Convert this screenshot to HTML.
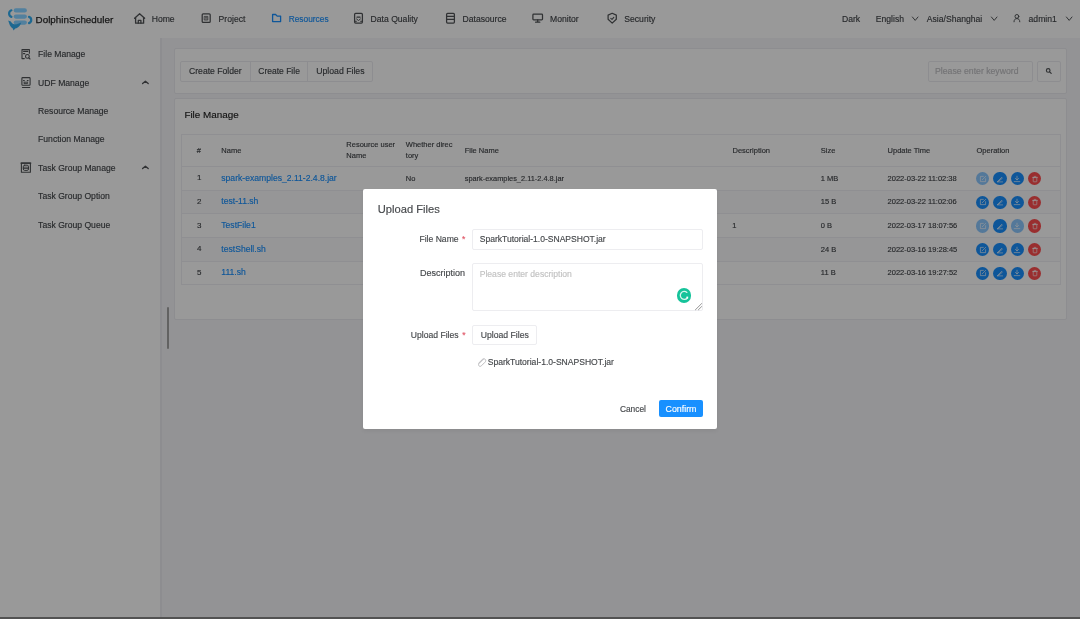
<!DOCTYPE html>
<html><head><meta charset="utf-8"><title>DolphinScheduler</title>
<style>
html,body{margin:0;padding:0;width:1080px;height:619px;overflow:hidden;background:#fff;font-family:"Liberation Sans",sans-serif}
.r{position:absolute;display:block}
.t{position:absolute;white-space:nowrap;line-height:1;-webkit-text-stroke:0.15px currentColor}
.wrap{position:absolute;left:0;top:0;width:1080px;height:619px;filter:blur(0.35px)}
</style></head><body><div class="wrap">
<div class="r" style="left:-4px;top:-4px;width:1088.00px;height:42.00px;background:#fff"></div>
<div class="t" style="left:35.60px;top:14.67px;font-size:9.84px;color:#2a2a2a;-webkit-text-stroke:0.25px #2a2a2a">DolphinScheduler</div>
<svg class="r" style="left:132px;top:11px" width="16" height="15" viewBox="132 11 16 15" fill="none" stroke="#505356" stroke-width="1.3" stroke-linecap="round" stroke-linejoin="round"><path d="M134.6 18.3 L139.6 13.8 L144.6 18.3"/><path d="M135.6 17.6 V23.2 H143.6 V17.6"/><path d="M138.3 23.2 V20.3 H140.9 V23.2"/></svg>
<div class="t" style="left:151.70px;top:14.62px;font-size:8.6px;color:#43464a;">Home</div>
<svg class="r" style="left:200px;top:12px" width="13" height="13" viewBox="200 12 13 13" fill="none" stroke="#505356" stroke-width="1.25" stroke-linecap="round" stroke-linejoin="round"><rect x="202.2" y="13.8" width="8" height="8.6" rx="1"/><rect x="204.6" y="16.4" width="3.2" height="3.6" stroke-width="0.8"/><path d="M205.4 17.6h1.6M205.4 18.9h1.6" stroke-width="0.7"/></svg>
<div class="t" style="left:218.60px;top:14.62px;font-size:8.6px;color:#43464a;">Project</div>
<svg class="r" style="left:270px;top:12px" width="14" height="12" viewBox="270 12 14 12" fill="none" stroke="#1890ff" stroke-width="1.3" stroke-linecap="round" stroke-linejoin="round"><path d="M272.6 14.5 H275.6 L277.2 16.1 H280.6 V21.6 H272.6 Z"/></svg>
<div class="t" style="left:288.70px;top:14.83px;font-size:8.35px;color:#1890ff;">Resources</div>
<svg class="r" style="left:352px;top:11px" width="13" height="14" viewBox="352 11 13 14" fill="none" stroke="#505356" stroke-width="1.25" stroke-linecap="round" stroke-linejoin="round"><rect x="354.6" y="13.4" width="7.8" height="9.6" rx="1"/><path d="M357 17.2h3"/><path d="M356.6 19 l1.9 1.5 l1.9 -1.5" stroke-width="1"/><path d="M354.8 21.3h1.6M360.6 21.3h1.6" stroke-width="1"/></svg>
<div class="t" style="left:370.60px;top:14.62px;font-size:8.6px;color:#43464a;">Data Quality</div>
<svg class="r" style="left:444px;top:11px" width="13" height="14" viewBox="444 11 13 14" fill="none" stroke="#505356" stroke-width="1.25" stroke-linecap="round" stroke-linejoin="round"><rect x="446.6" y="13.4" width="7.8" height="9.6" rx="1"/><path d="M446.6 16.3h7.8M446.6 19.4h7.8"/></svg>
<div class="t" style="left:462.60px;top:14.62px;font-size:8.6px;color:#43464a;">Datasource</div>
<svg class="r" style="left:530px;top:11px" width="15" height="14" viewBox="530 11 15 14" fill="none" stroke="#505356" stroke-width="1.25" stroke-linecap="round" stroke-linejoin="round"><rect x="532.9" y="14.2" width="9.6" height="5.6" rx="0.8"/><path d="M537.7 19.8v2.2M535.6 22.2h4.2"/></svg>
<div class="t" style="left:550.00px;top:14.62px;font-size:8.6px;color:#43464a;">Monitor</div>
<svg class="r" style="left:606px;top:11px" width="13" height="14" viewBox="606 11 13 14" fill="none" stroke="#505356" stroke-width="1.25" stroke-linecap="round" stroke-linejoin="round"><path d="M612.2 13.3 L616.3 15.1 V19.3 L612.2 23.1 L608.1 19.3 V15.1 Z"/><path d="M610.8 18.3 l1.2 1 l1.8 -1.9" stroke-width="1.1"/></svg>
<div class="t" style="left:624.30px;top:14.62px;font-size:8.6px;color:#43464a;">Security</div>
<div class="t" style="left:842.00px;top:14.62px;font-size:8.6px;color:#43464a;">Dark</div>
<div class="t" style="left:875.80px;top:14.62px;font-size:8.6px;color:#43464a;">English</div>
<svg class="r" style="left:911.0px;top:15.5px" width="9.0" height="7.0" viewBox="911.0 15.5 9.0 7.0" fill="none" stroke="#55585b" stroke-width="1.0" stroke-linecap="round" stroke-linejoin="round"><path d="M912.4 16.5 L915.2 19.9 L918.0 16.5"/></svg>
<div class="t" style="left:926.80px;top:14.62px;font-size:8.6px;color:#43464a;">Asia/Shanghai</div>
<svg class="r" style="left:990.2px;top:15.5px" width="9.0" height="7.0" viewBox="990.2 15.5 9.0 7.0" fill="none" stroke="#55585b" stroke-width="1.0" stroke-linecap="round" stroke-linejoin="round"><path d="M991.6 16.5 L994.4000000000001 19.9 L997.2 16.5"/></svg>
<svg class="r" style="left:1012px;top:13px" width="10" height="11" viewBox="1012 13 10 11" fill="none" stroke="#505356" stroke-width="1.0" stroke-linecap="round" stroke-linejoin="round"><circle cx="1016.9" cy="16.4" r="1.9"/><path d="M1014 21.8 C1014 19.6 1015.2 18.6 1016.9 18.6 C1018.6 18.6 1019.8 19.6 1019.8 21.8"/></svg>
<div class="t" style="left:1028.60px;top:14.62px;font-size:8.6px;color:#43464a;">admin1</div>
<svg class="r" style="left:1064.6px;top:15.5px" width="9.0" height="7.0" viewBox="1064.6 15.5 9.0 7.0" fill="none" stroke="#55585b" stroke-width="1.0" stroke-linecap="round" stroke-linejoin="round"><path d="M1066.0 16.5 L1068.8 19.9 L1071.6 16.5"/></svg>
<div class="r" style="left:-4px;top:38px;width:164.00px;height:585.00px;background:#fff"></div>
<div class="r" style="left:160px;top:38px;width:1.80px;height:585.00px;background:#ebebf0"></div>
<div class="t" style="left:38.10px;top:50.22px;font-size:8.6px;color:#43464a;">File Manage</div>
<div class="t" style="left:38.10px;top:78.62px;font-size:8.6px;color:#43464a;">UDF Manage</div>
<div class="t" style="left:38.10px;top:107.02px;font-size:8.6px;color:#43464a;">Resource Manage</div>
<div class="t" style="left:38.10px;top:135.32px;font-size:8.6px;color:#43464a;">Function Manage</div>
<div class="t" style="left:38.10px;top:163.72px;font-size:8.6px;color:#43464a;">Task Group Manage</div>
<div class="t" style="left:38.10px;top:192.12px;font-size:8.6px;color:#43464a;">Task Group Option</div>
<div class="t" style="left:38.10px;top:220.52px;font-size:8.6px;color:#43464a;">Task Group Queue</div>
<svg class="r" style="left:20px;top:47px" width="12" height="14" viewBox="20 47 12 14" fill="none" stroke="#505356" stroke-width="1.1" stroke-linecap="round" stroke-linejoin="round"><path d="M24.3 58.6 H22 V49.6 H29.4 V53.2"/><path d="M23.6 51.4h4.2"/><path d="M23.4 53.6h1.4"/><circle cx="27.4" cy="56.4" r="1.9"/><path d="M28.8 57.8 L30 59"/></svg>
<svg class="r" style="left:20px;top:76px" width="12" height="13" viewBox="20 76 12 13" fill="none" stroke="#505356" stroke-width="1.1" stroke-linecap="round" stroke-linejoin="round"><rect x="21.9" y="77.6" width="8.2" height="7.6" rx="0.8"/><path d="M23.5 80.6h0.8M27.3 80.6h0.8" stroke-width="1.1"/><rect x="24.4" y="82.2" width="3.2" height="1.4" stroke-width="0.9"/><path d="M22.4 87.5h7.4" stroke-width="1.1"/></svg>
<svg class="r" style="left:19px;top:161px" width="14" height="14" viewBox="19 161 14 14" fill="none" stroke="#505356" stroke-width="1.1" stroke-linecap="round" stroke-linejoin="round"><rect x="21.4" y="163.1" width="9" height="9.2"/><rect x="23.3" y="165.2" width="5.2" height="5.2" rx="1.4" stroke-width="1"/><path d="M23.3 167.2h5.2M23.3 168.5h5.2" stroke-width="0.8"/><path d="M21 163.1h9.8" stroke-width="1.3"/></svg>
<svg class="r" style="left:141.0px;top:80.0px" width="9.0" height="6.0" viewBox="141.0 80.0 9.0 6.0" fill="none" stroke="#505356" stroke-width="1.35" stroke-linecap="round" stroke-linejoin="round"><path d="M142.6 83.6 L145.4 81.3 L148.2 83.6"/></svg>
<svg class="r" style="left:141.0px;top:165.2px" width="9.0" height="6.0" viewBox="141.0 165.2 9.0 6.0" fill="none" stroke="#505356" stroke-width="1.35" stroke-linecap="round" stroke-linejoin="round"><path d="M142.6 168.79999999999998 L145.4 166.5 L148.2 168.79999999999998"/></svg>
<div class="r" style="left:161.8px;top:38px;width:922.20px;height:585.00px;background:#f6f6f9"></div>
<div class="r" style="left:173.6px;top:47.6px;width:893.90px;height:46.40px;background:#fff;border:1px solid #ebebf0;box-sizing:border-box;border-radius:2px"></div>
<div class="r" style="left:180.2px;top:61px;width:192.60px;height:20.70px;background:#fff;border:1px solid #ececf0;border-radius:2px;box-sizing:border-box"></div>
<div class="r" style="left:249.8px;top:61px;width:1.00px;height:20.70px;background:#ececf0"></div>
<div class="r" style="left:307.3px;top:61px;width:1.00px;height:20.70px;background:#ececf0"></div>
<div class="t" style="left:189.00px;top:66.89px;font-size:8.64px;color:#43464a;">Create Folder</div>
<div class="t" style="left:258.30px;top:67.00px;font-size:8.51px;color:#43464a;">Create File</div>
<div class="t" style="left:316.20px;top:66.83px;font-size:8.71px;color:#43464a;">Upload Files</div>
<div class="r" style="left:928.3px;top:61.4px;width:105.00px;height:20.20px;background:#fff;border:1px solid #ececf0;border-radius:2px;box-sizing:border-box"></div>
<div class="t" style="left:935.00px;top:66.94px;font-size:8.7px;color:#c0c0c4;">Please enter keyword</div>
<div class="r" style="left:1036.7px;top:61.4px;width:24.20px;height:20.20px;background:#fff;border:1px solid #ececf0;border-radius:2px;box-sizing:border-box"></div>
<svg class="r" style="left:1044px;top:66px" width="11" height="11" viewBox="1044 66 11 11" fill="none" stroke="#505356" stroke-width="1.15" stroke-linecap="round" stroke-linejoin="round"><circle cx="1048.2" cy="70.4" r="1.8"/><path d="M1049.6 71.8 L1051.2 73.4"/></svg>
<div class="r" style="left:173.6px;top:98.2px;width:893.90px;height:221.50px;background:#fff;border:1px solid #ebebf0;box-sizing:border-box;border-radius:2px"></div>
<div class="t" style="left:184.40px;top:109.65px;font-size:9.87px;color:#222;">File Manage</div>
<div class="r" style="left:180.8px;top:134.3px;width:880.20px;height:150.90px;background:#fff;border:1px solid #efeff3;box-sizing:border-box"></div>
<div class="r" style="left:181.8px;top:166px;width:878.20px;height:1.00px;background:#efeff3"></div>
<div class="r" style="left:181.8px;top:189.6px;width:878.20px;height:1.00px;background:#efeff3"></div>
<div class="r" style="left:181.8px;top:190.6px;width:878.20px;height:22.40px;background:#fafafc"></div>
<div class="r" style="left:181.8px;top:213.0px;width:878.20px;height:1.00px;background:#efeff3"></div>
<div class="r" style="left:181.8px;top:236.9px;width:878.20px;height:1.00px;background:#efeff3"></div>
<div class="r" style="left:181.8px;top:237.9px;width:878.20px;height:22.70px;background:#fafafc"></div>
<div class="r" style="left:181.8px;top:260.6px;width:878.20px;height:1.00px;background:#efeff3"></div>
<div class="t" style="left:196.70px;top:146.75px;font-size:7.5px;color:#43464a;">#</div>
<div class="t" style="left:221.30px;top:146.75px;font-size:7.5px;color:#43464a;">Name</div>
<div class="t" style="left:346.30px;top:141.15px;font-size:7.5px;color:#43464a;">Resource user</div>
<div class="t" style="left:346.30px;top:152.45px;font-size:7.5px;color:#43464a;">Name</div>
<div class="t" style="left:405.80px;top:141.15px;font-size:7.5px;color:#43464a;">Whether direc</div>
<div class="t" style="left:405.80px;top:152.45px;font-size:7.5px;color:#43464a;">tory</div>
<div class="t" style="left:464.70px;top:146.75px;font-size:7.5px;color:#43464a;">File Name</div>
<div class="t" style="left:732.50px;top:146.75px;font-size:7.5px;color:#43464a;">Description</div>
<div class="t" style="left:820.80px;top:146.75px;font-size:7.5px;color:#43464a;">Size</div>
<div class="t" style="left:887.60px;top:146.75px;font-size:7.5px;color:#43464a;">Update Time</div>
<div class="t" style="left:976.50px;top:146.75px;font-size:7.5px;color:#43464a;">Operation</div>
<div class="t" style="left:196.90px;top:174.23px;font-size:8.0px;color:#43464a;">1</div>
<div class="t" style="left:221.30px;top:173.72px;font-size:8.6px;color:#1890ff;">spark-examples_2.11-2.4.8.jar</div>
<div class="t" style="left:405.80px;top:174.65px;font-size:7.5px;color:#43464a;">No</div>
<div class="t" style="left:464.70px;top:174.74px;font-size:7.4px;color:#43464a;">spark-examples_2.11-2.4.8.jar</div>
<div class="t" style="left:820.80px;top:174.65px;font-size:7.5px;color:#43464a;">1 MB</div>
<div class="t" style="left:887.60px;top:174.65px;font-size:7.5px;color:#43464a;">2022-03-22 11:02:38</div>
<div class="r" style="left:976.10px;top:171.90px;width:13.4px;height:13.4px;border-radius:50%;background:#8cc8ff"></div>
<svg class="r" style="left:978.8px;top:174.6px" width="8.0" height="8.0" viewBox="978.8 174.6 8.0 8.0" fill="none" stroke="rgba(255,255,255,.85)" stroke-width="0.75" stroke-linecap="round" stroke-linejoin="round"><path d="M983.0999999999999 176.0 H980.1999999999999 V181.2 H985.4 V178.29999999999998"/><path d="M982.0 179.4 L985.4 176.0"/></svg>
<div class="r" style="left:993.35px;top:171.90px;width:13.4px;height:13.4px;border-radius:50%;background:#1890ff"></div>
<svg class="r" style="left:996.05px;top:174.6px" width="8.0" height="8.0" viewBox="996.05 174.6 8.0 8.0" fill="none" stroke="rgba(255,255,255,.85)" stroke-width="0.75" stroke-linecap="round" stroke-linejoin="round"><path d="M997.65 181.0 L1001.65 177.0 L1002.4499999999999 177.79999999999998 L998.4499999999999 181.0 Z"/><path d="M997.4499999999999 181.5 H1002.65" stroke-width="0.7"/></svg>
<div class="r" style="left:1010.60px;top:171.90px;width:13.4px;height:13.4px;border-radius:50%;background:#1890ff"></div>
<svg class="r" style="left:1013.3px;top:174.6px" width="8.0" height="8.0" viewBox="1013.3 174.6 8.0 8.0" fill="none" stroke="rgba(255,255,255,.85)" stroke-width="0.75" stroke-linecap="round" stroke-linejoin="round"><path d="M1017.3 175.79999999999998 V179.4 M1015.6999999999999 178.0 L1017.3 179.6 L1018.9 178.0 M1014.5 181.2 H1020.0999999999999"/></svg>
<div class="r" style="left:1027.85px;top:171.90px;width:13.4px;height:13.4px;border-radius:50%;background:#ff4d4f"></div>
<svg class="r" style="left:1030.55px;top:174.6px" width="8.0" height="8.0" viewBox="1030.55 174.6 8.0 8.0" fill="none" stroke="rgba(255,255,255,.85)" stroke-width="0.75" stroke-linecap="round" stroke-linejoin="round"><rect x="1032.75" y="177.2" width="3.6" height="4.2" rx="0.5"/><path d="M1031.95 177.0h5.2M1033.6499999999999 176.0h1.8"/></svg>
<div class="t" style="left:196.90px;top:197.93px;font-size:8.0px;color:#43464a;">2</div>
<div class="t" style="left:221.30px;top:197.42px;font-size:8.6px;color:#1890ff;">test-11.sh</div>
<div class="t" style="left:405.80px;top:198.35px;font-size:7.5px;color:#43464a;">No</div>
<div class="t" style="left:464.70px;top:198.44px;font-size:7.4px;color:#43464a;">test-11.sh</div>
<div class="t" style="left:820.80px;top:198.35px;font-size:7.5px;color:#43464a;">15 B</div>
<div class="t" style="left:887.60px;top:198.35px;font-size:7.5px;color:#43464a;">2022-03-22 11:02:06</div>
<div class="r" style="left:976.10px;top:195.60px;width:13.4px;height:13.4px;border-radius:50%;background:#1890ff"></div>
<svg class="r" style="left:978.8px;top:198.3px" width="8.0" height="8.0" viewBox="978.8 198.3 8.0 8.0" fill="none" stroke="rgba(255,255,255,.85)" stroke-width="0.75" stroke-linecap="round" stroke-linejoin="round"><path d="M983.0999999999999 199.7 H980.1999999999999 V204.89999999999998 H985.4 V201.99999999999997"/><path d="M982.0 203.1 L985.4 199.7"/></svg>
<div class="r" style="left:993.35px;top:195.60px;width:13.4px;height:13.4px;border-radius:50%;background:#1890ff"></div>
<svg class="r" style="left:996.05px;top:198.3px" width="8.0" height="8.0" viewBox="996.05 198.3 8.0 8.0" fill="none" stroke="rgba(255,255,255,.85)" stroke-width="0.75" stroke-linecap="round" stroke-linejoin="round"><path d="M997.65 204.7 L1001.65 200.7 L1002.4499999999999 201.49999999999997 L998.4499999999999 204.7 Z"/><path d="M997.4499999999999 205.2 H1002.65" stroke-width="0.7"/></svg>
<div class="r" style="left:1010.60px;top:195.60px;width:13.4px;height:13.4px;border-radius:50%;background:#1890ff"></div>
<svg class="r" style="left:1013.3px;top:198.3px" width="8.0" height="8.0" viewBox="1013.3 198.3 8.0 8.0" fill="none" stroke="rgba(255,255,255,.85)" stroke-width="0.75" stroke-linecap="round" stroke-linejoin="round"><path d="M1017.3 199.49999999999997 V203.1 M1015.6999999999999 201.7 L1017.3 203.29999999999998 L1018.9 201.7 M1014.5 204.89999999999998 H1020.0999999999999"/></svg>
<div class="r" style="left:1027.85px;top:195.60px;width:13.4px;height:13.4px;border-radius:50%;background:#ff4d4f"></div>
<svg class="r" style="left:1030.55px;top:198.3px" width="8.0" height="8.0" viewBox="1030.55 198.3 8.0 8.0" fill="none" stroke="rgba(255,255,255,.85)" stroke-width="0.75" stroke-linecap="round" stroke-linejoin="round"><rect x="1032.75" y="200.89999999999998" width="3.6" height="4.2" rx="0.5"/><path d="M1031.95 200.7h5.2M1033.6499999999999 199.7h1.8"/></svg>
<div class="t" style="left:196.90px;top:221.63px;font-size:8.0px;color:#43464a;">3</div>
<div class="t" style="left:221.30px;top:221.12px;font-size:8.6px;color:#1890ff;">TestFile1</div>
<div class="t" style="left:405.80px;top:222.05px;font-size:7.5px;color:#43464a;">Yes</div>
<div class="t" style="left:464.70px;top:222.14px;font-size:7.4px;color:#43464a;">TestFile1</div>
<div class="t" style="left:732.30px;top:222.05px;font-size:7.5px;color:#43464a;">1</div>
<div class="t" style="left:820.80px;top:222.05px;font-size:7.5px;color:#43464a;">0 B</div>
<div class="t" style="left:887.60px;top:222.05px;font-size:7.5px;color:#43464a;">2022-03-17 18:07:56</div>
<div class="r" style="left:976.10px;top:219.30px;width:13.4px;height:13.4px;border-radius:50%;background:#8cc8ff"></div>
<svg class="r" style="left:978.8px;top:222.0px" width="8.0" height="8.0" viewBox="978.8 222.0 8.0 8.0" fill="none" stroke="rgba(255,255,255,.85)" stroke-width="0.75" stroke-linecap="round" stroke-linejoin="round"><path d="M983.0999999999999 223.4 H980.1999999999999 V228.6 H985.4 V225.7"/><path d="M982.0 226.8 L985.4 223.4"/></svg>
<div class="r" style="left:993.35px;top:219.30px;width:13.4px;height:13.4px;border-radius:50%;background:#1890ff"></div>
<svg class="r" style="left:996.05px;top:222.0px" width="8.0" height="8.0" viewBox="996.05 222.0 8.0 8.0" fill="none" stroke="rgba(255,255,255,.85)" stroke-width="0.75" stroke-linecap="round" stroke-linejoin="round"><path d="M997.65 228.4 L1001.65 224.4 L1002.4499999999999 225.2 L998.4499999999999 228.4 Z"/><path d="M997.4499999999999 228.9 H1002.65" stroke-width="0.7"/></svg>
<div class="r" style="left:1010.60px;top:219.30px;width:13.4px;height:13.4px;border-radius:50%;background:#8cc8ff"></div>
<svg class="r" style="left:1013.3px;top:222.0px" width="8.0" height="8.0" viewBox="1013.3 222.0 8.0 8.0" fill="none" stroke="rgba(255,255,255,.85)" stroke-width="0.75" stroke-linecap="round" stroke-linejoin="round"><path d="M1017.3 223.2 V226.8 M1015.6999999999999 225.4 L1017.3 227.0 L1018.9 225.4 M1014.5 228.6 H1020.0999999999999"/></svg>
<div class="r" style="left:1027.85px;top:219.30px;width:13.4px;height:13.4px;border-radius:50%;background:#ff4d4f"></div>
<svg class="r" style="left:1030.55px;top:222.0px" width="8.0" height="8.0" viewBox="1030.55 222.0 8.0 8.0" fill="none" stroke="rgba(255,255,255,.85)" stroke-width="0.75" stroke-linecap="round" stroke-linejoin="round"><rect x="1032.75" y="224.6" width="3.6" height="4.2" rx="0.5"/><path d="M1031.95 224.4h5.2M1033.6499999999999 223.4h1.8"/></svg>
<div class="t" style="left:196.90px;top:245.23px;font-size:8.0px;color:#43464a;">4</div>
<div class="t" style="left:221.30px;top:244.72px;font-size:8.6px;color:#1890ff;">testShell.sh</div>
<div class="t" style="left:405.80px;top:245.65px;font-size:7.5px;color:#43464a;">No</div>
<div class="t" style="left:464.70px;top:245.74px;font-size:7.4px;color:#43464a;">testShell.sh</div>
<div class="t" style="left:820.80px;top:245.65px;font-size:7.5px;color:#43464a;">24 B</div>
<div class="t" style="left:887.60px;top:245.65px;font-size:7.5px;color:#43464a;">2022-03-16 19:28:45</div>
<div class="r" style="left:976.10px;top:242.90px;width:13.4px;height:13.4px;border-radius:50%;background:#1890ff"></div>
<svg class="r" style="left:978.8px;top:245.6px" width="8.0" height="8.0" viewBox="978.8 245.6 8.0 8.0" fill="none" stroke="rgba(255,255,255,.85)" stroke-width="0.75" stroke-linecap="round" stroke-linejoin="round"><path d="M983.0999999999999 247.0 H980.1999999999999 V252.2 H985.4 V249.29999999999998"/><path d="M982.0 250.4 L985.4 247.0"/></svg>
<div class="r" style="left:993.35px;top:242.90px;width:13.4px;height:13.4px;border-radius:50%;background:#1890ff"></div>
<svg class="r" style="left:996.05px;top:245.6px" width="8.0" height="8.0" viewBox="996.05 245.6 8.0 8.0" fill="none" stroke="rgba(255,255,255,.85)" stroke-width="0.75" stroke-linecap="round" stroke-linejoin="round"><path d="M997.65 252.0 L1001.65 248.0 L1002.4499999999999 248.79999999999998 L998.4499999999999 252.0 Z"/><path d="M997.4499999999999 252.5 H1002.65" stroke-width="0.7"/></svg>
<div class="r" style="left:1010.60px;top:242.90px;width:13.4px;height:13.4px;border-radius:50%;background:#1890ff"></div>
<svg class="r" style="left:1013.3px;top:245.6px" width="8.0" height="8.0" viewBox="1013.3 245.6 8.0 8.0" fill="none" stroke="rgba(255,255,255,.85)" stroke-width="0.75" stroke-linecap="round" stroke-linejoin="round"><path d="M1017.3 246.79999999999998 V250.4 M1015.6999999999999 249.0 L1017.3 250.6 L1018.9 249.0 M1014.5 252.2 H1020.0999999999999"/></svg>
<div class="r" style="left:1027.85px;top:242.90px;width:13.4px;height:13.4px;border-radius:50%;background:#ff4d4f"></div>
<svg class="r" style="left:1030.55px;top:245.6px" width="8.0" height="8.0" viewBox="1030.55 245.6 8.0 8.0" fill="none" stroke="rgba(255,255,255,.85)" stroke-width="0.75" stroke-linecap="round" stroke-linejoin="round"><rect x="1032.75" y="248.2" width="3.6" height="4.2" rx="0.5"/><path d="M1031.95 248.0h5.2M1033.6499999999999 247.0h1.8"/></svg>
<div class="t" style="left:196.90px;top:268.83px;font-size:8.0px;color:#43464a;">5</div>
<div class="t" style="left:221.30px;top:268.32px;font-size:8.6px;color:#1890ff;">111.sh</div>
<div class="t" style="left:405.80px;top:269.25px;font-size:7.5px;color:#43464a;">No</div>
<div class="t" style="left:464.70px;top:269.34px;font-size:7.4px;color:#43464a;">111.sh</div>
<div class="t" style="left:820.80px;top:269.25px;font-size:7.5px;color:#43464a;">11 B</div>
<div class="t" style="left:887.60px;top:269.25px;font-size:7.5px;color:#43464a;">2022-03-16 19:27:52</div>
<div class="r" style="left:976.10px;top:266.50px;width:13.4px;height:13.4px;border-radius:50%;background:#1890ff"></div>
<svg class="r" style="left:978.8px;top:269.2px" width="8.0" height="8.0" viewBox="978.8 269.2 8.0 8.0" fill="none" stroke="rgba(255,255,255,.85)" stroke-width="0.75" stroke-linecap="round" stroke-linejoin="round"><path d="M983.0999999999999 270.6 H980.1999999999999 V275.80000000000007 H985.4 V272.90000000000003"/><path d="M982.0 274.00000000000006 L985.4 270.6"/></svg>
<div class="r" style="left:993.35px;top:266.50px;width:13.4px;height:13.4px;border-radius:50%;background:#1890ff"></div>
<svg class="r" style="left:996.05px;top:269.2px" width="8.0" height="8.0" viewBox="996.05 269.2 8.0 8.0" fill="none" stroke="rgba(255,255,255,.85)" stroke-width="0.75" stroke-linecap="round" stroke-linejoin="round"><path d="M997.65 275.6 L1001.65 271.6 L1002.4499999999999 272.40000000000003 L998.4499999999999 275.6 Z"/><path d="M997.4499999999999 276.1 H1002.65" stroke-width="0.7"/></svg>
<div class="r" style="left:1010.60px;top:266.50px;width:13.4px;height:13.4px;border-radius:50%;background:#1890ff"></div>
<svg class="r" style="left:1013.3px;top:269.2px" width="8.0" height="8.0" viewBox="1013.3 269.2 8.0 8.0" fill="none" stroke="rgba(255,255,255,.85)" stroke-width="0.75" stroke-linecap="round" stroke-linejoin="round"><path d="M1017.3 270.40000000000003 V274.00000000000006 M1015.6999999999999 272.6 L1017.3 274.20000000000005 L1018.9 272.6 M1014.5 275.80000000000007 H1020.0999999999999"/></svg>
<div class="r" style="left:1027.85px;top:266.50px;width:13.4px;height:13.4px;border-radius:50%;background:#ff4d4f"></div>
<svg class="r" style="left:1030.55px;top:269.2px" width="8.0" height="8.0" viewBox="1030.55 269.2 8.0 8.0" fill="none" stroke="rgba(255,255,255,.85)" stroke-width="0.75" stroke-linecap="round" stroke-linejoin="round"><rect x="1032.75" y="271.80000000000007" width="3.6" height="4.2" rx="0.5"/><path d="M1031.95 271.6h5.2M1033.6499999999999 270.6h1.8"/></svg>
<div class="r" style="left:166.8px;top:307px;width:2.00px;height:42.00px;background:#a4a4a4;border-radius:1px"></div>
<div class="r" style="left:-4px;top:-4px;width:1088.00px;height:627.00px;background:rgba(0,0,0,0.4)"></div>
<svg class="r" style="left:0px;top:0px" width="40" height="34" viewBox="0 0 40 34">
<g fill="#52809e">
<rect x="13.7" y="8.3" width="13.2" height="4.3" rx="2.15"/>
<rect x="13.7" y="14.4" width="13.2" height="4.3" rx="2.15"/>
<rect x="13.7" y="20.4" width="13.2" height="4.3" rx="2.15"/>
</g>
<g stroke="#1d6891" stroke-width="2.2" fill="none" stroke-linecap="round">
<path d="M11.4 10.3 A3.4 3.5 0 0 0 11.4 16.9"/>
<path d="M29 16.9 A3.4 3.3 0 0 1 29 23.1"/>
</g>
<path fill="#1d6891" d="M8.2 20.4 L10.8 21.4 C12 23.6 14.2 24.6 16.4 24.2 C18 23.9 19.6 23.2 21.2 22.6 C20.6 25.2 18.8 27.4 16.4 28.2 L15.2 28.4 L13.6 30.6 L12.6 28.2 C11 27.2 9.8 25.6 9.2 23.4 Z"/>
</svg>
<div class="r" style="left:362.6px;top:188.8px;width:354.80px;height:240.10px;background:#fff;border-radius:2px;box-shadow:0 2px 4px rgba(0,0,0,.06)"></div>
<div class="t" style="left:377.80px;top:203.86px;font-size:11.15px;color:#46494c;">Upload Files</div>
<div class="t" style="left:419.40px;top:235.00px;font-size:8.62px;color:#46494c;">File Name</div>
<div class="t" style="left:461.90px;top:235.02px;font-size:8.6px;color:#e05868;">*</div>
<div class="r" style="left:472.4px;top:229.4px;width:230.90px;height:20.40px;background:#fff;border:1px solid #ededf0;border-radius:2px;box-sizing:border-box"></div>
<div class="t" style="left:479.70px;top:235.06px;font-size:8.55px;color:#46494c;">SparkTutorial-1.0-SNAPSHOT.jar</div>
<div class="t" style="left:419.90px;top:269.26px;font-size:9.03px;color:#46494c;">Description</div>
<div class="r" style="left:472.4px;top:263.3px;width:230.90px;height:47.30px;background:#fff;border:1px solid #ededf0;border-radius:2px;box-sizing:border-box"></div>
<div class="t" style="left:479.70px;top:270.12px;font-size:8.6px;color:#c2c2c2;">Please enter description</div>
<div class="r" style="left:676.9px;top:288.2px;width:14.40px;height:14.40px;background:#15c39a;border-radius:50%"></div>
<svg class="r" style="left:677px;top:288px" width="14" height="14" viewBox="677 288 14 14" fill="none" stroke="#fff" stroke-width="1.3" stroke-linecap="round" stroke-linejoin="round"><path d="M686.9 292.4 A4 4 0 1 0 687.4 298" stroke="#d8f5ec" stroke-width="1.3"/><rect x="686.4" y="296.6" width="1.8" height="1.8" fill="#fff" stroke="none"/></svg>
<svg class="r" style="left:693px;top:302px" width="10" height="9" viewBox="693 302 10 9" fill="none" stroke="#888" stroke-width="0.9" stroke-linecap="round" stroke-linejoin="round"><path d="M701.6 303.6 L695.4 309.8 M701.6 306.6 L698.4 309.8"/></svg>
<div class="t" style="left:410.80px;top:330.82px;font-size:8.6px;color:#46494c;">Upload Files</div>
<div class="t" style="left:462.20px;top:330.82px;font-size:8.6px;color:#e05868;">*</div>
<div class="r" style="left:472.2px;top:325.4px;width:64.80px;height:19.90px;background:#fff;border:1px solid #ededf0;border-radius:2px;box-sizing:border-box"></div>
<div class="t" style="left:480.70px;top:330.76px;font-size:8.67px;color:#46494c;">Upload Files</div>
<svg class="r" style="left:476px;top:357px" width="11" height="11" viewBox="476 357 11 11" fill="none" stroke="#b4b4b8" stroke-width="0.9" stroke-linecap="round" stroke-linejoin="round"><path d="M483.2 359.4 L479.2 363.4 C478.3 364.3 478.4 365.3 479 365.9 C479.6 366.5 480.6 366.6 481.5 365.7 L485 362.2 C486 361.2 485.9 360 485.2 359.3 C484.5 358.6 483.3 358.5 482.3 359.5 L478.6 363.2"/></svg>
<div class="t" style="left:487.70px;top:357.55px;font-size:8.57px;color:#46494c;">SparkTutorial-1.0-SNAPSHOT.jar</div>
<div class="t" style="left:619.90px;top:405.21px;font-size:8.38px;color:#46494c;">Cancel</div>
<div class="r" style="left:659px;top:400.2px;width:44.00px;height:16.50px;background:#1890ff;border-radius:2px"></div>
<div class="t" style="left:665.50px;top:404.81px;font-size:8.85px;color:#fff;">Confirm</div>
<div class="r" style="left:-4px;top:617px;width:1088.00px;height:6.00px;background:#525252"></div>
</div></body></html>
